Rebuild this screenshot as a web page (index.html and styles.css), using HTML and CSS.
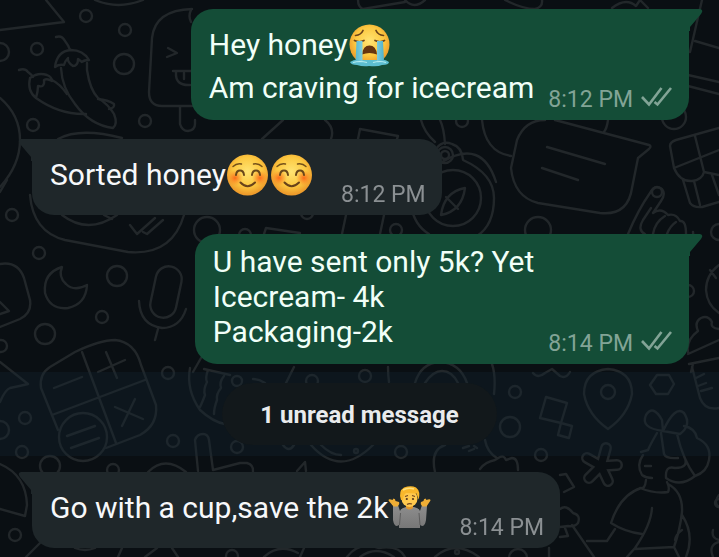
FILE: index.html
```html
<!DOCTYPE html>
<html lang="en">
<head>
<meta charset="utf-8">
<meta name="viewport" content="width=device-width, initial-scale=1">
<title>Chat</title>
<link rel="stylesheet" href="styles.css">
</head>
<body>
<svg class="wallpaper" viewBox="0 0 719 557" preserveAspectRatio="xMinYMin slice" aria-hidden="true">
  <defs>
    <radialGradient id="skin" cx="50%" cy="42%" r="55%">
      <stop offset="0" stop-color="#ffe473"/><stop offset=".65" stop-color="#fcc840"/><stop offset="1" stop-color="#ed9b2b"/>
    </radialGradient>
    <radialGradient id="blush">
      <stop offset="0" stop-color="#fb6a1c"/><stop offset="1" stop-color="#fb8a25" stop-opacity="0"/>
    </radialGradient>
    <linearGradient id="tear" x1="0" y1="0" x2="1" y2="0">
      <stop offset="0" stop-color="#58b8cf"/><stop offset=".5" stop-color="#a9e4ec"/><stop offset="1" stop-color="#4fb1cb"/>
    </linearGradient>
    <linearGradient id="shirt" x1="0" y1="0" x2="0" y2="1">
      <stop offset="0" stop-color="#8e8e8e"/><stop offset="1" stop-color="#777"/>
    </linearGradient>
    <symbol id="ticks" viewBox="0 0 32 20">
      <path d="M1 10l7 7.500L20.500 1M13.500 15l3 2.500L30 1" fill="none" stroke="currentColor" stroke-width="2.600"/>
    </symbol>
    <symbol id="sob" viewBox="0 0 44 51">
      <circle cx="21.500" cy="25.500" r="20" fill="url(#skin)"/>
      <path d="M7.500 16.500q5.500-.5 7.500-5M28 11.500q2 4.500 7.500 5M6.500 21.500q5 2.500 9.500 0M27 21.500q5 2.500 9.500 0" fill="none" stroke="#6b431a" stroke-width="1.700" stroke-linecap="round"/>
      <path d="M14 35.500q1-9 7.500-9t7.500 9q-7.500-3-15 0z" fill="#66340f"/>
      <path d="M2 43q5-3 9-2h21q5-1 9 2 0 3-7 3-4 2-13 1-6 1-12-1-6 0-7-3z" fill="#5dbed1"/>
      <path d="M8.500 22h6v21q-4 2-7 0zM29 22h6l1 21q-4 2-7 0z" fill="url(#tear)"/>
      <path d="M5 43.500q7-2 14 0M25 43.500q7-2 13 0" fill="none" stroke="#b5edf1" stroke-width="1.200"/>
    </symbol>
    <symbol id="smile" viewBox="0 0 44 51">
      <circle cx="21.500" cy="26" r="20.500" fill="url(#skin)"/>
      <ellipse cx="9" cy="29" rx="8" ry="8" fill="url(#blush)"/>
      <ellipse cx="34" cy="29" rx="8" ry="8" fill="url(#blush)"/>
      <path d="M7 17.500q3.500-3.500 8.500-2.500M27.500 15q5-1 8.500 2.500" fill="none" stroke="#745019" stroke-width="1.400" stroke-linecap="round"/>
      <path d="M10 26q.5-4.500 4-4.500t4 4.500M26 26q.5-4.500 4-4.500t4 4.500" fill="none" stroke="#69471a" stroke-width="2" stroke-linecap="round"/>
      <path d="M14.500 33.500q7 7.500 14.500 0" fill="none" stroke="#69431a" stroke-width="2" stroke-linecap="round"/>
    </symbol>
    <symbol id="shrug" viewBox="0 0 44 51">
      <path d="M5 24l5-1 2 6q1-3 6-4h8q5 1 6 4l2-6 5 1-1 14q-1 6-4 6l-2-1v3H11v-3l-2 1q-3 0-4-6z" fill="url(#shirt)"/>
      <path d="M11.500 43l1-12M32 43l-1-12" stroke="#5c5c5c" stroke-width="1"/>
      <path d="M9.500 24.500h-4L.5 18.500q0-2 4-.5l1-1.500q2 0 2 2.500l3.500 1q1 2-1.500 4.500zM34.500 24.500h4l4-6q0-2-4-.5l-1-1.500q-2 0-2 2.500l-2.500 1q-1 2 1.500 4.500z" fill="#efae36"/>
      <path d="M18 21h7v5q-3.500 3-7 0z" fill="#df952b"/>
      <ellipse cx="21.500" cy="16.500" rx="8" ry="8.500" fill="#ffc94e"/>
      <path d="M13 18q-3-9 3-12.500 7-2.500 12 0 5 4 2.500 12l-2-6-10-.5q-3 1-3.500 7z" fill="#f9b72b"/>
      <path d="M15 8q5-3 11-1" fill="none" stroke="#ffe07a" stroke-width="1.500"/>
      <path d="M17 14.500l3-1M24 13.500l3 1M19 22.500q2-1.500 5-.5" fill="none" stroke="#70431d" stroke-width="1.200"/>
      <circle cx="18.800" cy="17" r="1.100" fill="#53341a"/><circle cx="25" cy="17" r="1.100" fill="#53341a"/>
    </symbol>
  </defs>

  <g class="doodle">
    <!-- triangle, chillies and ice lolly -->
    <path d="M46 0L64 22 0 30M95 0q23 10 48 0M0 98q20 17 20 42T0 187M58 139q22-12 64-1"/>
    <path d="M56 37q6-2 9 4 4 5 5 9M55 67q2-16 16-17 12 0 18 10-5 0-7 2l-4-3q0 7-5 7-6-4-5-8-3 3-4 7-5-1-9 2z"/>
    <path d="M61 68q1 20 14 36 15 21 38 24 5-4 1-14-6-10-16-16-8-8-11-28v-7"/>
    <path d="M19 70q6-2 9 2 4 3 5 5M30 78q8-6 17-3 5 2 5 6-5-3-8-1 1 8-6 6 0 5-2 12-9-7-6-20zM36 98q24 17 50 16M52 80q8 4 15 14M98 99q10 1 16 5 1 4-5 5"/>
    <path d="M192 9q-37 1-40 29l-3 54q0 14 13 14h30M191 10q-3 6 0 12M168 48l9 5-10 4M173 71h18M176 72q-1 14 14 13M184 73v6M180 107v17q2 7 8 7 7-1 7-7v-4"/>
    <!-- shapes behind the first messages -->
    <path d="M358 0q0 7 5 9l42-7M405 0q9 10 20 0M262 139l21-19M325 120q10 8 6 19M358 139l2-10 38 7-1 3M421 120q3 12 14 22M440 120q4 8 5 24"/>
    <path d="M436 149q6-9 16-5 10 3 11 16 31 14 31 38 0 27-17 38M442 162q40-24 54 20M411 205q3 20 18 29"/>
    <circle cx="445" cy="155" r="8"/><circle cx="445" cy="155" r="4"/><circle cx="453" cy="198" r="28"/>
    <path d="M465 188q-21 4-24 27 21-4 24-27zM446 197l12 12M264 234l2-6 34 5M346 215l-4 19M384 215l-4 19"/>
    <path d="M505 0q18 9 30 9 8-2 7-9M612 8q14-11 24-2l4-6M640 0l8 8M702 0l-12 52M695 41l24 7M688 75l31 7M688 86l31 8"/>
    <path d="M555 120l94 25q3 1 0 4l-11 9-6 30q-4 28-32 25l-62-10q-24-6-27-35l6-28q8-20 28-20M547 147l58 17M542 168l36 12M482 120q3 32 29 36M608 120q-1 8-4 12"/>
    <path d="M719 128l-43 12q-6 2-6 6l4 22q6 14 18 13 10-1 12-9l15 3M695 136l9 36M674 168l45-18M683 180l7 23q4 5 12 4l17-5M694 181l6 24M712 175l7 20"/>
    <path d="M628 234q10-24 22-41 5-9 12-4 4 5-1 12l-8 12q8-6 15 2 8-2 12 6 6-1 6 13M645 234q-8-4-2-14l8-12M653 234q2-12 12-18M667 234q3-8 9-12M719 265q-13 10-13 25 1 15 13 23M710 270l6 8M689 246q5-8 4-14"/>
    <path d="M719 329q-9-1-7-7-4-7-11-4-7 4-3 13-12 9-10 21M688 354l31-14M689 364l30-6M693 364l-2 8"/>
    <!-- moon, microphone and phone -->
    <path d="M30 195q3 37 35 45l63 12q44 4 56-37M62 215q26 20 55 0M104 215l8 4M130 225l7 9 18-16M143 232l4 2 16-14M0 192l7-12"/>
    <path d="M62 267q-19 6-17 26 5 17 23 15 18-4 19-23-13 7-21-1-8-7-4-17z"/>
    <rect x="153" y="266" width="26" height="52" rx="13" transform="rotate(12 166 292)"/>
    <path d="M139 301q1 24 23 27 18 0 24-19M158 329l-3 11M0 264q18-3 24 14l6 22q2 13-10 19L0 327M0 302l9 9-9 3M193 372l8-14"/>
    <!-- calculator -->
    <path d="M58 430L41 388q-2-14 9-21l25-15q25-12 40-12 20 2 26 25l15 40q2 20-16 30l-34 13M82 352l34 91M52 415l93-35M115 407l28 12M135 399l-13 27M98 372l27-12M106 352l11 26M54 388l28-11M67 436l28-10M71 448l28-10"/>
    <circle cx="83" cy="437" r="24"/>
    <path d="M0 362l28 22q-8 2-18 4-5 2-10 14M0 464q26 11 27 41l-2 11-25-7M26 557l14-14M118 557l4-9M145 557l12-9M75 548q10 4 20 0M172 548l6 9"/>
    <!-- egg, brush and round shapes -->
    <path d="M190 368q-4 22 10 42 13 12 25 14M204 369l26 6M208 370q-3 8-1 12-4 8-2 13-3 8-5 12M224 376q-5 6-3 12-5 6-4 12-3 8-3 14M148 472q17-17 38 0M198 471l-3-31q2-6 8-6 5 0 6 6l4 30 27-7h7q7 2 6 9"/>
    <path d="M286 383l8-16M388 367q0 8 1 15M415 383q6-20 25-21 20 1 27 21M425 383q8-12 17-12 10 0 16 12M253 379q6 0 12 4M283 445q6 8 11 0M311 445q29 33 62 0M321 445q10 10 20 10M297 471l8-9 1 9M435 472q-5-22 10-27M463 448l6-2M469 451l5-2M474 446l3 2"/>
    <path d="M264 557q15-14 34-4M300 557l4-9M347 557q12-16 32-9 20-3 26 9M360 557q16-12 34 0M435 557q20-18 44 0"/>
    <path d="M492 364q4 12 2 30M533 373q5 6 12 0l7-4 8 7q6 3 10-4M546 397l21 6-6 20-21-5zM561 423l11 3-3 12-11-3zM657 375h12l5 9-6 10h-12l-6-9z"/>
    <path d="M608 369q-24 2-24 25 4 21 24 35 20-14 24-35 0-23-24-25zM692 367l8 31q5 13 19 10M696 378l8-4M698 386l8-3M701 391l11-3"/>
    <circle cx="608" cy="392" r="7"/>
    <path class="arm" d="M601 466l5-18M601 466l16-1M601 466l7 15M601 466l-12 12M601 466l-14-8"/>
    <path class="arm-core" d="M601 466l5-18M601 466l16-1M601 466l7 15M601 466l-12 12M601 466l-14-8"/>
    <!-- seated girl with a bow -->
    <path d="M663 431q-23-3-17-16 7-11 16 5l1 11q12-26 21-18 8 12-4 21zM684 426q11 2 13 12 15 7 12 22-2 12-14 16-15 12-29 2-1-13 9-10 15 0 9-12M677 434q6 26 18 42M661 433l3 21q2 5 14 4M657 433q-7 12-9 17l-7 2M643 455q-7 10-1 20 4 3 10 3M645 466h6"/>
    <path d="M646 480q-1 10-6 8 15 6 28 4 2-4-1-10M641 488q-21 7-30 35 14 9 31 11M652 508q-1 17-17 40l-8 9M668 484q15 8 14 28-2 18-8 35l-39 2M682 515q13 20 4 42M674 547l5 10M682 530q-6 4-7 10M615 529l-8 12h-20M572 525l22 32"/>
    <path d="M560 509q6-5 13 4 8 2 5 10-3 4-10 3l-8 1M560 475l6-1 8 13-10 5M565 528l3 8-8 1M549 548v9M480 469q5-7 15-9l5-3q4-2 6 3l6-2q6 0 6 12M485 440q2 12 12 18M719 495q-6 8 0 12M713 530q-2 8 6 10M713 557q-5-12 6-15"/>
    <!-- confetti -->
    <g>
      <circle cx="86" cy="16" r="6"/><circle cx="125" cy="30" r="6"/><circle cx="37" cy="49" r="6"/><circle cx="124" cy="64" r="10"/><circle cx="33" cy="125" r="6"/><circle cx="145" cy="121" r="6"/><circle cx="0" cy="52" r="9"/><circle cx="462" cy="121" r="6"/><circle cx="396" cy="230" r="6"/><circle cx="307" cy="213" r="6"/><circle cx="245" cy="235" r="6"/><circle cx="674" cy="117" r="12"/><circle cx="657" cy="192" r="5"/><circle cx="538" cy="230" r="13"/><circle cx="719" cy="232" r="8"/><circle cx="688" cy="291" r="6"/>
      <circle cx="12" cy="215" r="6"/><circle cx="39" cy="253" r="6"/><circle cx="117" cy="276" r="10"/><circle cx="102" cy="317" r="6"/><circle cx="45" cy="334" r="10"/><circle cx="1" cy="346" r="6"/><circle cx="207" cy="230" r="13"/><circle cx="25" cy="418" r="6"/><circle cx="0" cy="430" r="9"/><circle cx="22" cy="452" r="6"/><circle cx="50" cy="466" r="10"/><circle cx="113" cy="470" r="6"/><circle cx="168" cy="373" r="6"/><circle cx="173" cy="441" r="6"/><circle cx="237" cy="381" r="5"/><circle cx="237" cy="447" r="6"/><circle cx="15" cy="535" r="6"/><circle cx="232" cy="556" r="6"/>
      <circle cx="312" cy="381" r="6"/><circle cx="365" cy="376" r="6"/><circle cx="356" cy="451" r="2"/><circle cx="401" cy="452" r="6"/><circle cx="457" cy="552" r="2"/><circle cx="515" cy="392" r="6"/><circle cx="510" cy="427" r="10"/><circle cx="541" cy="455" r="6"/><circle cx="518" cy="558" r="9"/><circle cx="719" cy="503" r="4"/>
    </g>
  </g>
</svg>

<main class="chat">
  <article class="bubble out">
    <svg class="tail" viewBox="0 0 14 22" aria-hidden="true"><path d="M0 0h11q4 1 1 5L1 18v4H0z"/></svg>
    <p class="text">Hey honey<svg class="emoji" role="img" aria-label="loudly crying face"><use href="#sob"/></svg><br>Am craving for icecream</p>
    <div class="meta"><time>8:12 PM</time><svg class="ticks" role="img" aria-label="Delivered"><use href="#ticks"/></svg></div>
  </article>

  <article class="bubble in">
    <svg class="tail" viewBox="0 0 14 22" aria-hidden="true"><path d="M14 0H3q-4 1-1 5l11 13v4h1z"/></svg>
    <p class="text">Sorted honey<svg class="emoji" role="img" aria-label="smiling face"><use href="#smile"/></svg><svg class="emoji" role="img" aria-label="smiling face"><use href="#smile"/></svg></p>
    <div class="meta"><time>8:12 PM</time></div>
  </article>

  <article class="bubble out">
    <svg class="tail" viewBox="0 0 14 22" aria-hidden="true"><path d="M0 0h11q4 1 1 5L1 18v4H0z"/></svg>
    <p class="text">U have sent only 5k? Yet<br>Icecream- 4k<br>Packaging-2k</p>
    <div class="meta"><time>8:14 PM</time><svg class="ticks" role="img" aria-label="Delivered"><use href="#ticks"/></svg></div>
  </article>

  <div class="unread"><span class="unread-label">1 unread message</span></div>

  <article class="bubble in">
    <svg class="tail" viewBox="0 0 14 22" aria-hidden="true"><path d="M14 0H3q-4 1-1 5l11 13v4h1z"/></svg>
    <p class="text">Go with a cup,save the 2k<svg class="emoji" role="img" aria-label="person shrugging"><use href="#shrug"/></svg></p>
    <div class="meta"><time>8:14 PM</time></div>
  </article>
</main>
</body>
</html>
```
FILE: styles.css
```css
* {
  box-sizing: border-box;
}

body {
  margin: 0;
  min-height: 100vh;
  background: #0a0f13;
  font-family: Roboto, "Liberation Sans", sans-serif;
  overflow-x: hidden;
}

.wallpaper {
  position: fixed;
  inset: 0;
  z-index: -1;
  width: 100%;
  height: 100%;
}

.doodle {
  fill: none;
  stroke: #22272a;
  stroke-width: 2.4;
  stroke-linecap: round;
  stroke-linejoin: round;
}

.doodle .arm {
  stroke-width: 12;
}

.doodle .arm-core {
  stroke: #0a0f13;
  stroke-width: 7;
}

.chat {
  display: flex;
  flex-direction: column;
  padding: 9px 0;
}

.bubble {
  position: relative;
  display: flex;
  align-items: flex-end;
  padding: 10px 16px 7px 18px;
  margin-bottom: 19px;
  border-radius: 22px;
}

.out {
  align-self: flex-end;
  gap: 14px;
  margin-right: 30px;
  border-top-right-radius: 0;
  background: #144d37;
  color: #f1fff8;
}

.in {
  align-self: flex-start;
  gap: 27px;
  margin-left: 32px;
  border-top-left-radius: 0;
  background: #1f272a;
  color: #f7f8fa;
}

.tail {
  position: absolute;
  top: 0;
  width: 14px;
  height: 22px;
}

.out .tail {
  left: 100%;
  fill: #144d37;
}

.in .tail {
  right: 100%;
  fill: #1f272a;
}

.text {
  margin: 0;
  padding-bottom: 8px;
  font-size: 30px;
  line-height: 35px;
}

.emoji {
  width: 44px;
  height: 51px;
  vertical-align: -15px;
}

.meta {
  display: flex;
  align-items: flex-start;
  gap: 8px;
  font-size: 23px;
  line-height: 26px;
  white-space: nowrap;
}

.out .meta {
  color: #82a496;
}

.in .meta {
  color: #8b9093;
}

.ticks {
  width: 32px;
  height: 20px;
}

.unread {
  display: flex;
  justify-content: center;
  margin: -11px 0 16px;
  padding: 11px 0;
  background: rgba(20, 36, 50, 0.35);
}

.unread-label {
  padding: 19px 38px 17px;
  border-radius: 31px;
  background: #12181b;
  color: #e9ebed;
  font-size: 24px;
  font-weight: 700;
  line-height: 26px;
}
```
